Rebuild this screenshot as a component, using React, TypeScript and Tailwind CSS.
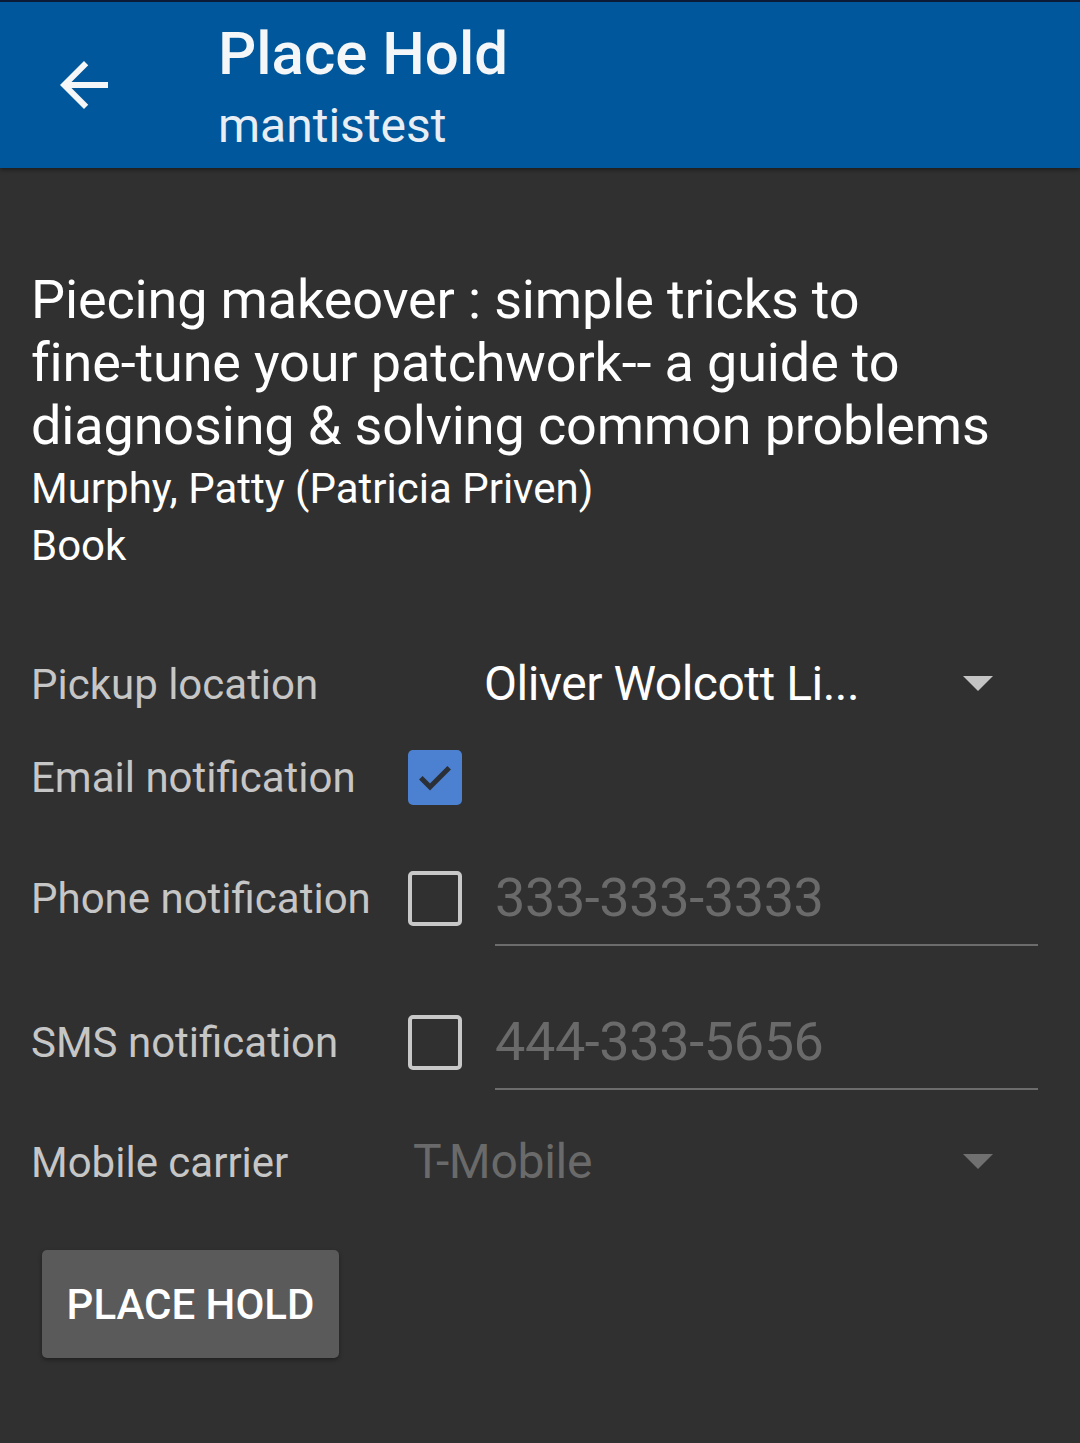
import React from 'react';

function Caret({ color }: { color: string }) {
  return (
    <svg width="30" height="16" viewBox="0 0 30 16" className="shrink-0">
      <path d="M0 0 L30 0 L15 15 Z" fill={color} />
    </svg>
  );
}

function CheckBox({ checked }: { checked?: boolean }) {
  if (checked) {
    return (
      <div className="w-[54px] h-[55px] rounded-[5px] bg-[#4c80d0] flex items-center justify-center shrink-0">
        <svg width="40" height="40" viewBox="0 0 24 24">
          <path d="M3.5 12.5 L9 18 L20.5 6.5" stroke="#2b2f36" strokeWidth="3" fill="none" />
        </svg>
      </div>
    );
  }
  return <div className="w-[54px] h-[55px] rounded-[5px] border-[4px] border-[#c8c8c8] shrink-0" />;
}

export default function App() {
  return (
    <div className="w-[1080px] h-[1443px] bg-[#303030] overflow-hidden" style={{ fontFamily: 'Roboto, "Noto Sans", sans-serif' }}>
      {/* App bar */}
      <div className="h-[2px] bg-[#0c1c38]" />
      <div className="h-[166px] bg-[#01579b] flex items-center shadow-[0_2px_4px_rgba(0,0,0,0.4)]">
        <div className="w-[72px] h-[72px] ml-[48px] flex items-center justify-center">
          <svg width="72" height="72" viewBox="0 0 24 24">
            <path d="M20 11H7.83l5.59-5.59L12 4l-8 8 8 8 1.41-1.41L7.83 13H20v-2z" fill="#f4f6f8" />
          </svg>
        </div>
        <div className="ml-[98px] flex flex-col mt-[4px]">
          <div className="text-[60px] leading-[70px] font-medium text-[#f4f6f8]">Place Hold</div>
          <div className="text-[48px] leading-[58px] mt-[8px] text-[#e8eef4]">mantistest</div>
        </div>
      </div>

      <div className="px-[31px]">
        {/* Item info */}
        <div className="pt-[100px] text-white">
          <div className="w-[990px] text-[54px] leading-[63px] tracking-[-0.15px]">
            Piecing makeover : simple tricks to <span className="whitespace-nowrap">fine-tune</span> your patchwork-- a guide to diagnosing &amp; solving common problems
          </div>
          <div className="text-[42px] leading-[57px] mt-[3px]">Murphy, Patty (Patricia Priven)</div>
          <div className="text-[42px] leading-[57px]">Book</div>
        </div>

        {/* Pickup location */}
        <div className="flex items-center h-[96px] mt-[62px]">
          <div className="w-[377px] text-[42px] text-[#c6c6c6]">Pickup location</div>
          <div className="flex-1 flex items-center pr-[56px]">
            <div className="flex-1 pl-[76px] text-[48px] text-white tracking-[-0.5px]">Oliver Wolcott Li...</div>
            <Caret color="#c4c4c4" />
          </div>
        </div>

        {/* Email */}
        <div className="flex items-center h-[90px]">
          <div className="w-[377px] text-[42px] text-[#c6c6c6]">Email notification</div>
          <CheckBox checked />
        </div>

        {/* Phone */}
        <div className="flex items-center h-[100px] mt-[26px]">
          <div className="w-[377px] text-[42px] text-[#c6c6c6]">Phone notification</div>
          <CheckBox />
          <div className="flex-1 ml-[33px] mr-[11px] h-[96px] flex items-center border-b-2 border-[#6c6c6c] text-[54px] text-[#6a6a6a] tracking-[-0.4px]">
            333-333-3333
          </div>
        </div>

        {/* SMS */}
        <div className="flex items-center h-[100px] mt-[44px]">
          <div className="w-[377px] text-[42px] text-[#c6c6c6]">SMS notification</div>
          <CheckBox />
          <div className="flex-1 ml-[33px] mr-[11px] h-[96px] flex items-center border-b-2 border-[#6c6c6c] text-[54px] text-[#6a6a6a] tracking-[-0.4px]">
            444-333-5656
          </div>
        </div>

        {/* Mobile carrier */}
        <div className="flex items-center h-[100px] mt-[20px]">
          <div className="w-[377px] text-[42px] text-[#c6c6c6]">Mobile carrier</div>
          <div className="flex-1 flex items-center pr-[56px]">
            <div className="flex-1 pl-[5px] text-[48px] text-[#6a6a6a] tracking-[-0.3px]">T-Mobile</div>
            <Caret color="#707070" />
          </div>
        </div>

        {/* Button */}
        <button className="mt-[38px] ml-[11px] w-[297px] h-[108px] rounded-[5px] bg-[#5a5a5b] text-white text-[42px] font-medium shadow-[0_2px_4px_rgba(0,0,0,0.35)]">
          PLACE HOLD
        </button>
      </div>
    </div>
  );
}
